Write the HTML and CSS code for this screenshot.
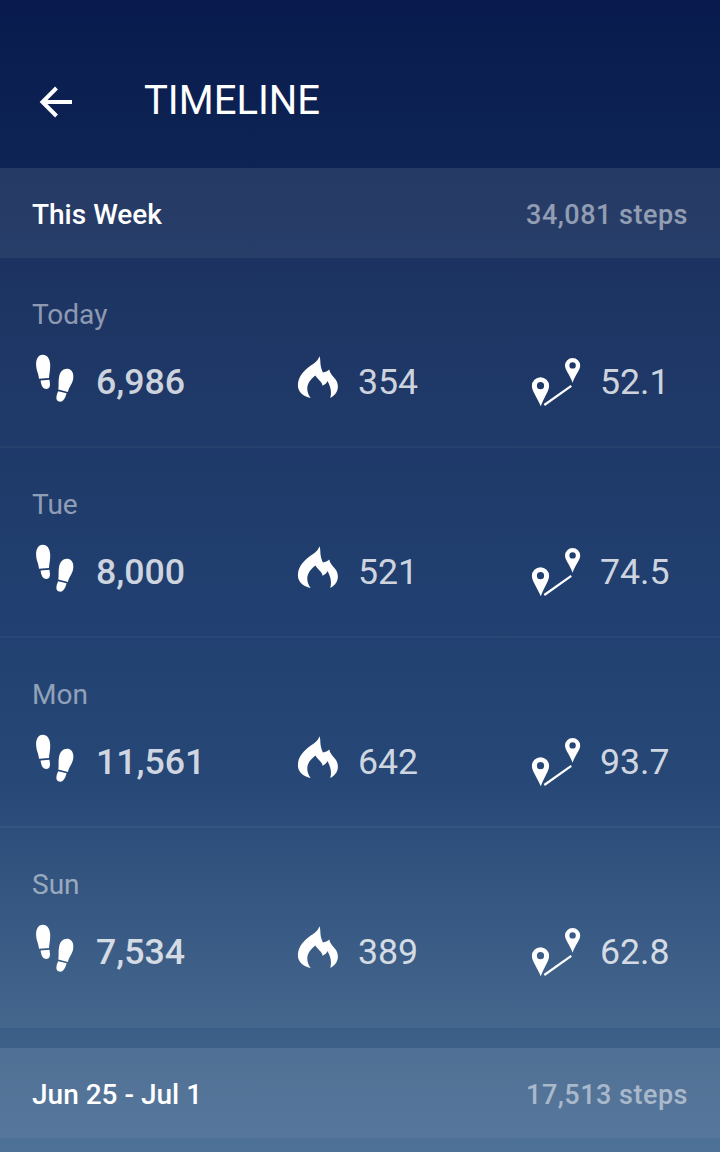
FILE: index.html
```html
<!DOCTYPE html>
<html lang="en">
<head>
    <meta charset="UTF-8">
    <meta name="viewport" content="width=device-width, initial-scale=1.0">
    <title>Timeline</title>
    <link rel="stylesheet" href="styles.css">
</head>
<body>
    <!-- Shared icons -->
    <svg class="sprite">
        <symbol id="steps" viewBox="0 0 44 52">
            <path d="M10.800 1.800C6 1.800 4 6.500 4.100 11.500C4.200 17.500 6.500 20 7 25.800L17 25C17.200 20.500 18.400 17 18.200 11.500C17.900 6 15.300 1.800 10.800 1.800Z"/>
            <path d="M8.600 27.500L17.400 26.800C18.300 31.500 18.600 35.700 14.600 35.900C10.400 36 9.300 32.500 8.600 27.500Z"/>
            <path d="M36 15.700C40.300 16.300 41.900 20.800 41.200 25.700C40.400 31 36.900 34 35.900 38.900L26.300 36.500C27 32 26.100 29 27.100 23.700C28.100 18.300 31.500 15.100 36 15.700Z"/>
            <path d="M26.200 38.200L34.600 40.300C33.200 45 31.500 49.200 27.500 48.600C23 47.900 24.100 42.500 26.200 38.200Z"/>
        </symbol>
        <symbol id="flame" viewBox="0 0 44 44">
            <path d="M23.300 1.300C24.600 3.500 24.200 7 24.600 10C25 13 25.900 15 26.900 17.600C29.500 17 31.800 16.200 33.300 14.500C34.300 19.500 37.500 21.500 40 25C43.500 31 42.500 38.500 34.200 43C36 37.500 34.600 31.500 31.400 26C30.800 28 29 29.600 26.500 30.800C26.200 26.500 21.800 24.800 19.400 20.500C15 24 11.300 28 11.300 33.500C11.300 37 12.300 39.800 14.700 43C7 41.500 1.900 36.500 1.900 30.500C1.900 22.500 6.500 17.500 11 13.500C16 9.300 22 7 23.300 1.300Z"/>
        </symbol>
        <symbol id="route" viewBox="0 0 52 52">
            <path fill-rule="evenodd" d="M10.500 22.300A8.600 8.600 0 0 1 19.100 30.900C19.100 36 14 42 10.800 51.200C7 42 1.900 36 1.900 30.900A8.600 8.600 0 0 1 10.500 22.300ZM10.500 27.100A3.600 3.600 0 1 0 10.500 34.300A3.600 3.600 0 1 0 10.500 27.100Z"/>
            <path fill-rule="evenodd" d="M42.600 2.900A7.600 7.600 0 0 1 50.200 10.500C50.200 15 45.500 19.500 42.600 27.800C39.700 19.500 35 15 35 10.500A7.600 7.600 0 0 1 42.600 2.900ZM42.600 7.200A3.200 3.200 0 1 0 42.600 13.600A3.200 3.200 0 1 0 42.600 7.200Z"/>
            <path class="route-line" d="M14.300 50L41.300 30.800"/>
        </symbol>
    </svg>

    <header class="app-bar">
        <svg class="back" viewBox="0 0 34 34">
            <path d="M33 17H4M17.500 3L3.500 17L17.500 31"/>
        </svg>
        <h1>TIMELINE</h1>
    </header>

    <section class="week">
        <div class="week-header">
            <h2>This Week</h2>
            <span class="total">34,081 steps</span>
        </div>
        <div class="day">
            <div class="day-name">Today</div>
            <div class="stats">
                <div class="stat main"><svg class="icon-steps"><use href="#steps"/></svg>6,986</div>
                <div class="stat"><svg class="icon-flame"><use href="#flame"/></svg>354</div>
                <div class="stat"><svg class="icon-route"><use href="#route"/></svg>52.1</div>
            </div>
        </div>
        <div class="day">
            <div class="day-name">Tue</div>
            <div class="stats">
                <div class="stat main"><svg class="icon-steps"><use href="#steps"/></svg>8,000</div>
                <div class="stat"><svg class="icon-flame"><use href="#flame"/></svg>521</div>
                <div class="stat"><svg class="icon-route"><use href="#route"/></svg>74.5</div>
            </div>
        </div>
        <div class="day">
            <div class="day-name">Mon</div>
            <div class="stats">
                <div class="stat main"><svg class="icon-steps"><use href="#steps"/></svg>11,561</div>
                <div class="stat"><svg class="icon-flame"><use href="#flame"/></svg>642</div>
                <div class="stat"><svg class="icon-route"><use href="#route"/></svg>93.7</div>
            </div>
        </div>
        <div class="day">
            <div class="day-name">Sun</div>
            <div class="stats">
                <div class="stat main"><svg class="icon-steps"><use href="#steps"/></svg>7,534</div>
                <div class="stat"><svg class="icon-flame"><use href="#flame"/></svg>389</div>
                <div class="stat"><svg class="icon-route"><use href="#route"/></svg>62.8</div>
            </div>
        </div>
    </section>

    <section class="week next">
        <div class="week-header">
            <h2>Jun 25 - Jul 1</h2>
            <span class="total">17,513 steps</span>
        </div>
    </section>
</body>
</html>
```
FILE: styles.css
```css
* {
    box-sizing: border-box;
}
body {
    font-family: Roboto, 'Liberation Sans', sans-serif;
    background: linear-gradient(#091b4e 0, #0d2454 168px, #112b5b 300px, #16366a 620px, #1c3f70 780px, #3a5d86 1020px, #456a92 1152px);
    color: #ffffff;
    display: flex;
    flex-direction: column;
    height: 1152px;
    margin: 0;
    overflow: hidden;
}
.sprite {
    display: none;
}
svg {
    fill: #ffffff;
    flex: none;
}
.app-bar {
    display: flex;
    align-items: center;
    height: 168px;
    padding: 36px 39px 0;
}
.back {
    width: 34px;
    height: 34px;
    fill: none;
    stroke: #ffffff;
    stroke-width: 4;
}
h1 {
    font-size: 40px;
    font-weight: 400;
    line-height: 48px;
    margin: 0 0 2px 71px;
}
.week {
    margin-bottom: 20px;
}
.next {
    flex: 1;
    margin-bottom: 0;
    background: linear-gradient(transparent 90px, rgba(255, 255, 255, 0.05) 90px);
}
.week-header {
    display: flex;
    justify-content: space-between;
    align-items: center;
    height: 90px;
    padding: 2px 32px 0;
    background: rgba(255, 255, 255, 0.1);
}
h2 {
    font-size: 28px;
    font-weight: 500;
    margin: 0;
}
.total {
    font-size: 27px;
    font-weight: 500;
    letter-spacing: 0.5px;
    padding-top: 2px;
    color: rgba(255, 255, 255, 0.5);
}
.day {
    height: 190px;
    padding: 40px 32px 0;
    background: rgba(255, 255, 255, 0.05);
    border-bottom: 2px solid rgba(255, 255, 255, 0.04);
}
.day:last-child {
    height: 200px;
    border-bottom: none;
}
.day-name {
    font-size: 28px;
    line-height: 34px;
    color: rgba(255, 255, 255, 0.5);
}
.stats {
    display: grid;
    grid-template-columns: 264px 234px 1fr;
    margin-top: 22px;
}
.stat {
    display: flex;
    align-items: center;
    height: 56px;
    font-size: 35.7px;
    color: rgba(255, 255, 255, 0.8);
}
.main {
    font-weight: 500;
}
.icon-steps {
    width: 44px;
    height: 52px;
    margin: -6px 20px 0 0;
}
.icon-flame {
    width: 44px;
    height: 44px;
    margin: -10px 18px 0 0;
}
.icon-route {
    width: 52px;
    height: 52px;
    margin: -2px 18px 0 0;
}
.route-line {
    stroke: #ffffff;
    stroke-width: 2.2;
}
```
